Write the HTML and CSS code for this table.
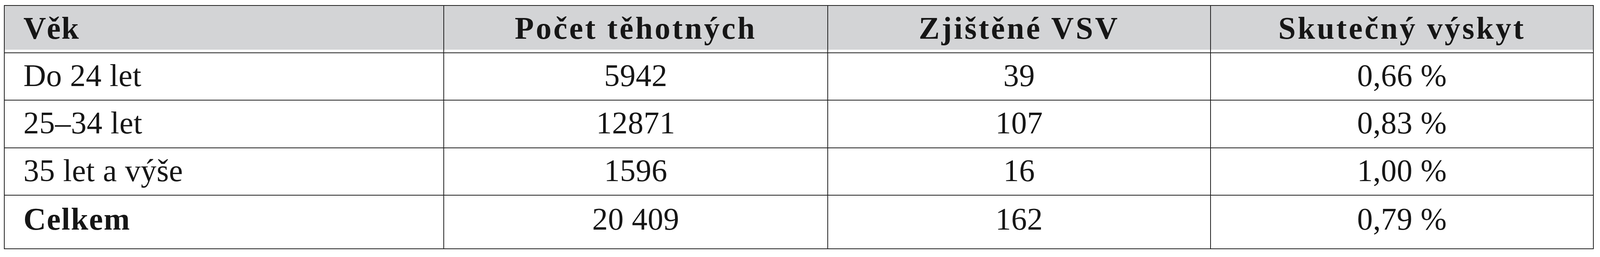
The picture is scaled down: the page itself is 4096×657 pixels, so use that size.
FILE: index.html
```html
<!DOCTYPE html>
<html>
<head>
<meta charset="utf-8">
<title>Věk a výskyt VSV</title>
<link rel="stylesheet" href="styles.css">
</head>
<body>
<div class="page">
  <table class="data">
    <colgroup>
      <col class="c1"><col class="c2"><col class="c3"><col class="c4">
    </colgroup>
    <thead>
      <tr class="hrow">
        <th class="lead">Věk</th>
        <th>Počet těhotných</th>
        <th>Zjištěné VSV</th>
        <th>Skutečný výskyt</th>
      </tr>
    </thead>
    <tbody>
      <tr class="brow">
        <td class="lead">Do 24 let</td>
        <td>5942</td>
        <td>39</td>
        <td>0,66 %</td>
      </tr>
      <tr class="brow mid">
        <td class="lead">25–34 let</td>
        <td>12871</td>
        <td>107</td>
        <td>0,83 %</td>
      </tr>
      <tr class="brow">
        <td class="lead">35 let a výše</td>
        <td>1596</td>
        <td>16</td>
        <td>1,00 %</td>
      </tr>
      <tr class="brow total">
        <td class="lead strong">Celkem</td>
        <td>20 409</td>
        <td>162</td>
        <td>0,79 %</td>
      </tr>
    </tbody>
  </table>
</div>
</body>
</html>
```

FILE: styles.css
```css
html, body {
  margin: 0;
  padding: 0;
  background: #ffffff;
}

.page {
  padding: 13px 0 0 10px;
}

.data {
  border-collapse: separate;
  border-spacing: 0;
  table-layout: fixed;
  width: 4070px;
  border-left: 2px solid #1f1f1f;
  border-top: 2px solid #1f1f1f;
  color: #161616;
  font-family: "Liberation Serif", serif;
}

.c1 { width: 1125px; }
.c2 { width: 983px; }
.c3 { width: 980px; }
.c4 { width: 980px; }

.data th,
.data td {
  box-sizing: border-box;
  border-right: 2px solid #1f1f1f;
  border-bottom: 2px solid #1f1f1f;
  padding: 0;
  text-align: center;
  vertical-align: top;
  white-space: nowrap;
  font-family: "Liberation Serif", serif;
  font-size: 80px;
  line-height: 80px;
}

.data .lead {
  text-align: left;
  padding-left: 48px;
}

.hrow th {
  height: 121px;
  font-weight: 700;
  letter-spacing: 5px;
  padding-top: 17px;
  background: linear-gradient(to bottom, #d3d4d6 0, #d3d4d6 112px, #ffffff 112px);
}

.hrow th.lead {
  letter-spacing: 2px;
}

.brow td {
  height: 121px;
  font-weight: 400;
  letter-spacing: 0.5px;
  padding-top: 17px;
}

.brow.mid td {
  height: 122px;
}

.brow.total td {
  height: 137px;
  padding-top: 20px;
}

.brow td.strong {
  font-weight: 700;
  letter-spacing: 2px;
}
```
